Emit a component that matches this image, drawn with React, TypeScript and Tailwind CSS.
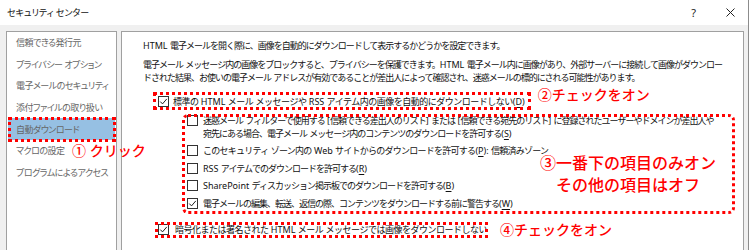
import React from "react";

const U = ({ c }: { c: string }) => (
  <span className="underline underline-offset-[1.5px] decoration-[0.8px]">{c}</span>
);

function amp(p: string) {
  const segs = p.split(/&(.)/);
  return segs.map((x, i) => (i % 2 ? <U key={i} c={x} /> : <React.Fragment key={i}>{x}</React.Fragment>));
}

function J({ s }: { s: string }) {
  const parts = s.split(/([\x20-\x7E]+)/).filter((p) => p.length > 0);
  return (
    <>
      {parts.map((p, i) =>
        /^[\x20-\x7E]+$/.test(p) ? (
          <span key={i} className="tracking-normal">
            {amp(p)}
          </span>
        ) : (
          <React.Fragment key={i}>{p}</React.Fragment>
        )
      )}
    </>
  );
}

function Check({ checked, className = "" }: { checked: boolean; className?: string }) {
  return (
    <span
      className={
        "w-[11px] h-[11px] shrink-0 border border-[#333333] bg-white flex items-center justify-center " +
        className
      }
    >
      {checked && (
        <svg width="9" height="9" viewBox="0 0 9 9">
          <path d="M1.3 4.6 L3.5 6.9 L7.8 1.9" fill="none" stroke="#1e1e1e" strokeWidth="1" />
        </svg>
      )}
    </span>
  );
}

const leftItems = [
  "信頼できる発行元",
  "プライバシー オプション",
  "電子メールのセキュリティ",
  "添付ファイルの取り扱い",
  "自動ダウンロード",
  "マクロの設定",
  "プログラムによるアクセス",
];

export default function App() {
  return (
    <div className="w-[749px] h-[250px] overflow-hidden relative flex flex-col bg-[#f0f0f0] border-r border-[#8c8c8c] font-['Noto_Sans','Noto_Sans_CJK_JP',sans-serif] [font-feature-settings:'palt'] text-[9px] leading-[13px] text-black">
      {/* title bar */}
      <div className="h-[25px] shrink-0 bg-white flex items-center pl-[7px] pr-[13px]">
        <span className="text-[#111]">セキュリティ センター</span>
        <span className="ml-auto text-[11px] leading-none text-[#222]">?</span>
        <svg className="ml-[30px]" width="9" height="9" viewBox="0 0 9 9">
          <path d="M0.5 0.5 L8.5 8.5 M8.5 0.5 L0.5 8.5" stroke="#222" strokeWidth="1" />
        </svg>
      </div>

      {/* body */}
      <div className="flex gap-[4px] pl-[6px] pr-[4px] pt-[6px] h-[240px] shrink-0">
        {/* left nav */}
        <div className="w-[111px] shrink-0 border border-[#a0a0a0] bg-white flex flex-col tracking-[-0.5px]">
          {leftItems.map((t, i) => (
            <div
              key={t}
              className={
                "relative h-[21.6px] flex items-center pl-[8px] mx-[1px] text-[#666666] whitespace-nowrap " +
                (i === 4 ? "bg-[#96c0e3]" : "")
              }
            >
              {t}
              {i === 4 && (
                <div className="absolute -left-[0px] -right-[1px] -top-[1px] -bottom-[2px] border-[3px] border-dotted border-[#ff0000]" />
              )}
              {i === 5 && (
                <span className="absolute z-10 left-[64px] top-1/2 -translate-y-1/2 whitespace-nowrap text-[14px] leading-[20px] font-medium tracking-normal text-[#ff0000] [font-feature-settings:normal]">
                  ① クリック
                </span>
              )}
            </div>
          ))}
        </div>

        {/* right content */}
        <div className="flex-1 border border-[#a0a0a0] bg-white pl-[21px] pt-[7px] whitespace-nowrap text-[#111] [font-feature-settings:normal] tracking-[-1px]">
          <div>
            <J s="HTML 電子メールを開く際に、画像を自動的にダウンロードして表示するかどうかを設定できます。" />
          </div>
          <div className="mt-[6px]">
            <J s="電子メール メッセージ内の画像をブロックすると、プライバシーを保護できます。HTML 電子メール内に画像があり、外部サーバーに接続して画像がダウンロー" />
            <br />
            <J s="ドされた結果、お使いの電子メール アドレスが有効であることが差出人によって確認され、迷惑メールの標的にされる可能性があります。" />
          </div>

          <div className="mt-[9px] h-[16px] flex items-center">
            <div className="relative flex items-center ml-[15px]">
              <Check checked />
              <span className="ml-[4px] tracking-[-0.5px]">
                <J s="標準の HTML メール メッセージや RSS アイテム内の画像を自動的にダウンロードしない(&D)" />
              </span>
              <div className="absolute -left-[5px] -right-[6px] -top-[3px] -bottom-[2px] border-[3px] border-dotted border-[#ff0000]" />
            </div>
            <span className="ml-[13px] -translate-y-[6px] text-[14px] leading-[20px] font-medium tracking-normal text-[#ff0000]">
              ②チェックをオン
            </span>
          </div>

          <div className="relative mt-[4.5px] ml-[39px] mr-[8px] pl-[5px] flex flex-col gap-[4.5px]">
            <div className="flex items-start">
              <Check checked={false} className="mt-[1px]" />
              <span className="ml-[5px]">
                <J s="迷惑メール フィルターで使用する [信頼できる差出人のリスト] または [信頼できる宛先のリスト] に登録されたユーザーやドメインが差出人や" />
                <br />
                <J s="宛先にある場合、電子メール メッセージ内のコンテンツのダウンロードを許可する(&S)" />
              </span>
            </div>
            <div className="flex items-center">
              <Check checked={false} />
              <span className="ml-[5px] tracking-[-0.75px]">
                <J s="このセキュリティ ゾーン内の Web サイトからのダウンロードを許可する(&P): 信頼済みゾーン" />
              </span>
            </div>
            <div className="flex items-center">
              <Check checked={false} />
              <span className="ml-[5px]">
                <J s="RSS アイテムでのダウンロードを許可する(&R)" />
              </span>
            </div>
            <div className="flex items-center">
              <Check checked={false} />
              <span className="ml-[5px]">
                <J s="SharePoint ディスカッション掲示板でのダウンロードを許可する(&B)" />
              </span>
            </div>
            <div className="flex items-center">
              <Check checked />
              <span className="ml-[5px]">
                <J s="電子メールの編集、転送、返信の際、コンテンツをダウンロードする前に警告する(&W)" />
              </span>
            </div>
            <div className="absolute inset-x-0 top-0 -bottom-[4px] rounded-[6px] border-[3px] border-dotted border-[#ff0000]" />
            <div className="absolute left-[356px] top-[38.5px] w-[180px] text-center text-[16px] leading-[22px] font-medium tracking-normal text-[#ff0000]">
              ③一番下の項目のみオン
              <br />
              その他の項目はオフ
            </div>
          </div>

          <div className="mt-[12px] h-[16px] flex items-center">
            <div className="relative flex items-center ml-[15px]">
              <Check checked />
              <span className="ml-[6px] tracking-[-0.5px]">
                <J s="暗号化または署名された HTML メール メッセージでは画像をダウンロードしない" />
              </span>
              <div className="absolute -left-[3px] -right-[1px] -top-[1.5px] -bottom-[1.5px] border-[3px] border-dotted border-[#ff0000]" />
            </div>
            <span className="ml-[13px] text-[14px] leading-[20px] font-medium tracking-normal text-[#ff0000]">
              ④チェックをオン
            </span>
          </div>
        </div>
      </div>
    </div>
  );
}
